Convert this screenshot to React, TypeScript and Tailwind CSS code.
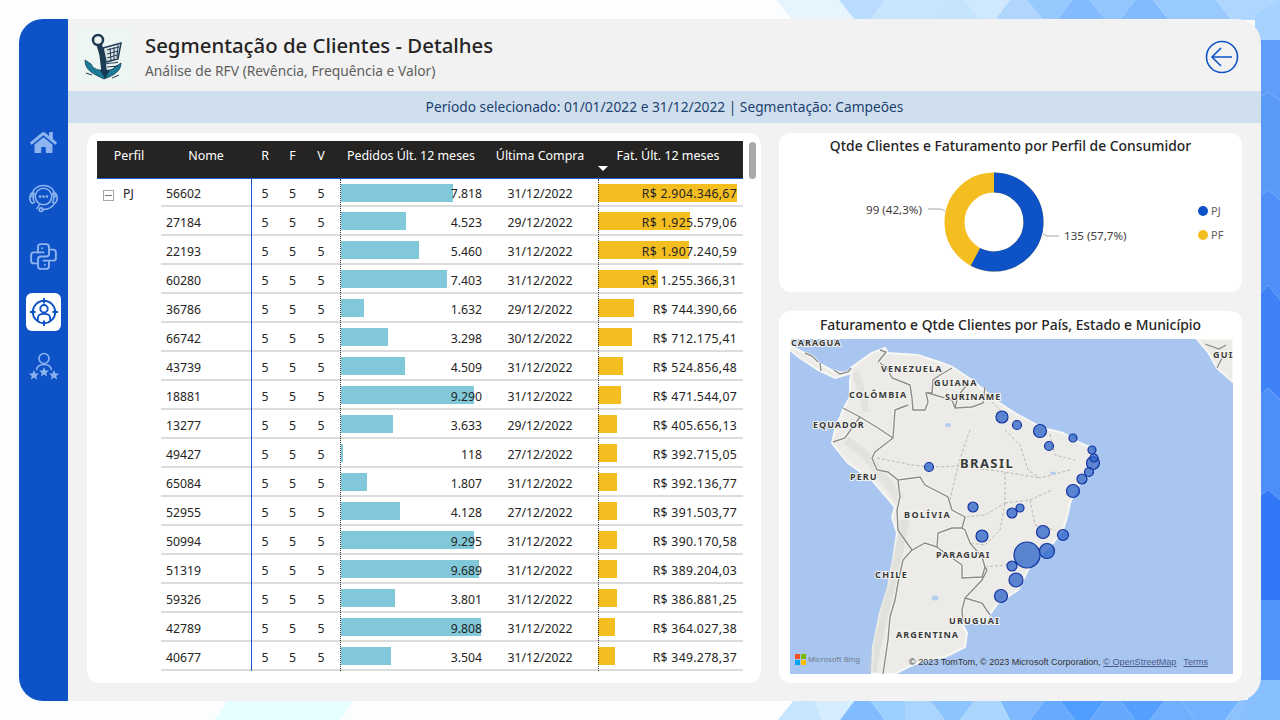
import { FaHome } from "react-icons/fa";
import { TbBrandPython } from "react-icons/tb";

const rows = [
  ["56602", 7818, "7.818", "31/12/2022", 2904346.67, "R$ 2.904.346,67"],
  ["27184", 4523, "4.523", "29/12/2022", 1925579.06, "R$ 1.925.579,06"],
  ["22193", 5460, "5.460", "31/12/2022", 1907240.59, "R$ 1.907.240,59"],
  ["60280", 7403, "7.403", "31/12/2022", 1255366.31, "R$ 1.255.366,31"],
  ["36786", 1632, "1.632", "29/12/2022", 744390.66, "R$ 744.390,66"],
  ["66742", 3298, "3.298", "30/12/2022", 712175.41, "R$ 712.175,41"],
  ["43739", 4509, "4.509", "31/12/2022", 524856.48, "R$ 524.856,48"],
  ["18881", 9290, "9.290", "31/12/2022", 471544.07, "R$ 471.544,07"],
  ["13277", 3633, "3.633", "29/12/2022", 405656.13, "R$ 405.656,13"],
  ["49427", 118, "118", "27/12/2022", 392715.05, "R$ 392.715,05"],
  ["65084", 1807, "1.807", "31/12/2022", 392136.77, "R$ 392.136,77"],
  ["52955", 4128, "4.128", "27/12/2022", 391503.77, "R$ 391.503,77"],
  ["50994", 9295, "9.295", "31/12/2022", 390170.58, "R$ 390.170,58"],
  ["51319", 9689, "9.689", "31/12/2022", 389204.03, "R$ 389.204,03"],
  ["59326", 3801, "3.801", "31/12/2022", 386881.25, "R$ 386.881,25"],
  ["42789", 9808, "9.808", "31/12/2022", 364027.38, "R$ 364.027,38"],
  ["40677", 3504, "3.504", "31/12/2022", 349278.37, "R$ 349.278,37"],
] as const;

// top, bottom and right strips of the mosaic behind the report
const mosaic: [string, string][] = [
  ["777,0 839,0 855,20 792,20", "#e6f4fe"],
  ["839,0 885,0 870,20 855,20", "#b9dbfe"],
  ["885,0 947,0 932,20 870,20", "#c8e5fe"],
  ["947,0 965,0 981,20 932,20", "#c5e4fe"],
  ["965,0 1010,0 995,20 981,20", "#cfe8fe"],
  ["1010,0 1027,0 1043,20 995,20", "#b1d6fe"],
  ["1027,0 1072,0 1057,20 1043,20", "#97c8fe"],
  ["1072,0 1090,0 1106,20 1057,20", "#84bbfe"],
  ["1090,0 1135,0 1120,20 1106,20", "#93c5fe"],
  ["1135,0 1153,0 1169,20 1120,20", "#82bafe"],
  ["1153,0 1216,0 1232,20 1169,20", "#98cafe"],
  ["1216,0 1280,0 1280,20 1232,20", "#aed6fe"],
  ["228,700 353,700 340,720 215,720", "#e8ffff"],
  ["794,700 815,700 822,720 778,720", "#c5e6fe"],
  ["815,700 855,700 840,720 822,720", "#d5edfe"],
  ["855,700 870,700 885,720 840,720", "#80bcfe"],
  ["870,700 905,700 905,720 885,720", "#9bcffe"],
  ["905,700 930,700 945,720 905,720", "#aad5fe"],
  ["930,700 975,700 960,720 945,720", "#8dc4fe"],
  ["975,700 1000,700 1010,720 960,720", "#aad6fe"],
  ["1000,700 1045,700 1030,720 1010,720", "#80b8fe"],
  ["1045,700 1060,700 1075,720 1030,720", "#66abfe"],
  ["1060,700 1105,700 1090,720 1075,720", "#4f9dfe"],
  ["1105,700 1120,700 1135,720 1090,720", "#66a8fe"],
  ["1120,700 1165,700 1150,720 1135,720", "#559ffe"],
  ["1165,700 1180,700 1195,720 1150,720", "#6eb0fe"],
  ["1180,700 1240,700 1225,720 1195,720", "#72b2fe"],
  ["1240,700 1280,700 1280,720 1225,720", "#8dc2fe"],
  ["1255,15 1280,0 1280,40 1255,40", "#a5d2fe"],
  ["1255,40 1280,40 1280,100 1268,92 1255,100", "#5e9efa"],
  ["1255,100 1268,92 1280,100 1280,200 1268,190 1255,200", "#5a9bf9"],
  ["1255,200 1268,190 1280,200 1280,300 1268,285 1255,300", "#4f90f8"],
  ["1255,300 1268,285 1280,300 1280,400 1268,388 1255,400", "#3f82f7"],
  ["1255,400 1268,388 1280,400 1280,500 1268,490 1255,500", "#4d8ff9"],
  ["1255,500 1268,490 1280,500 1280,600 1255,600", "#3277f7"],
  ["1255,600 1280,600 1280,680 1255,680", "#5096fa"],
  ["1255,680 1280,680 1280,720 1240,720", "#87c0fd"],
];

const land =
  "790,339 792,347 805,353 818,363 835,372 847,373 852,367 872,353 885,348 888,353 918,355 942,363 952,367 972,380 998,402 1018,415 1035,424 1047,429 1063,433 1080,443 1090,447 1098,462 1087,477 1077,487 1070,503 1067,517 1063,530 1053,543 1043,552 1030,566 1018,590 998,603 988,617 985,623 962,623 967,633 965,647 945,657 925,660 908,667 895,674 872,674 873,647 880,613 888,587 893,560 897,533 892,517 895,507 872,480 848,463 832,443 835,430 843,410 850,397 850,380 852,373 835,378 818,370 800,358 790,350";

const borders = [
  "880,363 887,368 892,378 905,383 910,385 912,398 913,410 925,410 928,402 926,393 932,393 933,380 940,375 952,368",
  "928,393 952,400 955,408 972,407 983,403 985,387",
  "955,408 958,396 966,386",
  "895,410 908,405 895,410 893,438 875,452 872,458 877,470 888,472 898,480 920,477 925,485 948,497 952,510 965,517 962,528 952,528 938,533 937,547 925,543 912,550 900,533 898,530 897,510 900,497 898,480",
  "843,408 860,417 878,428 893,438",
  "833,442 845,438 852,428 860,417",
  "937,547 945,553 962,565 962,578 982,577 985,567 982,557 970,543 965,530 962,528",
  "912,550 903,560 898,583 895,600 890,617 888,640 883,674",
  "985,567 987,570 982,580 965,598 962,610 963,622",
  "965,598 982,603 990,615",
  "805,353 812,356 818,362",
  "820,363 821,371",
  "834,370 840,374 848,372 851,368",
  "880,350 886,352 878,362",
];

const stateLines = [
  "877,458 912,465 933,467 958,466 1005,472 1040,478",
  "970,430 962,453 958,466 950,500",
  "1005,472 1005,503 985,515 965,517",
  "1005,503 1030,500 1052,490",
  "1005,430 1020,445 1028,470 1040,478 1070,470",
  "1050,434 1055,455 1075,460",
  "1005,503 1000,530 985,545 970,543",
  "1030,500 1035,525 1055,530",
  "985,567 1005,565 1025,560",
  "985,395 1002,412",
];

const places: [string, number, number, number, number][] = [
  ["CARAGUA", 791, 346, 9, 1],
  ["VENEZUELA", 881, 372, 9, 1.1],
  ["GUIANA", 934, 386, 9, 1.2],
  ["SURINAME", 945, 400, 9, 1],
  ["COLÔMBIA", 849, 398, 9, 1.2],
  ["EQUADOR", 813, 428, 9, 1],
  ["PERU", 850, 480, 9, 1.1],
  ["BRASIL", 960, 468, 13, 1.4],
  ["BOLÍVIA", 904, 518, 9, 1.4],
  ["PARAGUAI", 936, 558, 9, 1],
  ["CHILE", 875, 578, 9, 1.4],
  ["URUGUAI", 949, 624, 9, 1.2],
  ["ARGENTINA", 896, 638, 9, 1.1],
  ["GUI", 1213, 358, 9, 1.2],
];

const bubbles = [
  [1002, 417, 6], [1017, 425, 4.5], [929, 467, 4.5], [1040, 431, 6.5], [1049, 446, 4.5],
  [1073, 438, 4], [1092, 450, 4], [1093, 463, 6.5], [1094, 458, 4], [1089, 472, 4.5],
  [1082, 479, 5], [1073, 491, 6.5], [973, 507, 5], [1012, 513, 5], [1020, 508, 4],
  [982, 536, 6], [1043, 532, 6.5], [1063, 535, 5.5], [1027, 555, 13], [1047, 551, 7.5],
  [1012, 566, 5], [1016, 580, 7], [1001, 596, 6.5],
];

const Logo = () => (
  <svg viewBox="0 0 60 60" className="h-[60px] w-[60px]">
    <rect width="60" height="60" fill="#eef6f4" />
    <circle cx="24" cy="14" r="5" fill="none" stroke="#1d3b52" strokeWidth="2.5" />
    <path d="M25 18 L28 28 L30 44" stroke="#1d3b52" strokeWidth="5.5" fill="none" />
    <path d="M29 22 L47 17 L44 33 L32 36 Z" fill="#dfe7e6" stroke="#1d3b52" strokeWidth="1.5" />
    <path d="M33 24 L45 21 M33 28 L44 25 M33 32 L43 29 M36 22 L37 35 M40 21 L40 34 M44 19 L43 32" stroke="#1d3b52" strokeWidth="1" />
    <path d="M11 34 C11 45 20 48 30 53 C38 50 47 46 47 37 L41 41 C37 45 34 44 32 44 L27 44 C22 44 19 42 17 38 Z" fill="#1b7e98" stroke="#143a55" strokeWidth="0.8" />
    <path d="M26 44 L31 53 L36 44 Z" fill="#143a55" />
    <path d="M32 38 C36 36 40 38 44 36 M33 41 C37 40 40 41 44 40" stroke="#1d3b52" strokeWidth="1.2" fill="none" />
    <path d="M12 47 L18 49 M38 52 L45 49" stroke="#143a55" strokeWidth="1" />
  </svg>
);

const HeadsetIcon = () => (
  <svg viewBox="0 0 32 32" fill="none" stroke="#8db4ee" strokeWidth="1.6" className="h-[31px] w-[31px]">
    <circle cx="16" cy="14" r="8.5" />
    <path d="M9 27 L12 22" />
    <circle cx="12.5" cy="14" r="0.6" fill="#8db4ee" />
    <circle cx="16" cy="14" r="0.6" fill="#8db4ee" />
    <circle cx="19.5" cy="14" r="0.6" fill="#8db4ee" />
    <path d="M4 15 C4 7 9 2.5 16 2.5 C23 2.5 28 7 28 15" />
    <path d="M4.5 10 C1 12 1 19 4.5 21 L6.5 20 C5 17 5 14 6.5 11 Z" />
    <path d="M27.5 10 C31 12 31 19 27.5 21 L25.5 20 C27 17 27 14 25.5 11 Z" />
    <path d="M27 21 C26 25 22 27 15 27.5" />
    <circle cx="13.5" cy="27.5" r="1.8" />
  </svg>
);

const TargetIcon = () => (
  <svg viewBox="0 0 32 32" fill="none" stroke="#0d52c7" strokeWidth="2" className="h-[30px] w-[30px]">
    <circle cx="16" cy="16" r="12" />
    <path d="M16 1 V7 M16 25 V31 M1 16 H7 M25 16 H31" />
    <circle cx="16" cy="12.5" r="4" />
    <path d="M9.5 25 V22 C9.5 19 12 18 16 18 C20 18 22.5 19 22.5 22 V25" />
  </svg>
);

const star = "M0 -5 L1.5 -1.6 L5 -1.4 L2.3 0.9 L3.2 4.5 L0 2.5 L-3.2 4.5 L-2.3 0.9 L-5 -1.4 L-1.5 -1.6 Z";

const RatedIcon = () => (
  <svg viewBox="0 0 30 30" fill="none" className="h-[30px] w-[30px]">
    <circle cx="15" cy="7.5" r="5" stroke="#8db4ee" strokeWidth="1.6" />
    <path d="M7.5 19 C8 15.5 11 13.5 15 13.5 C19 13.5 22 15.5 22.5 19" stroke="#8db4ee" strokeWidth="1.6" />
    <path d={star} fill="#8db4ee" transform="translate(5 24)" />
    <path d={star} fill="#8db4ee" transform="translate(15 21)" />
    <path d={star} fill="#8db4ee" transform="translate(25 24)" />
  </svg>
);

const Sidebar = () => (
  <nav className="flex w-[49px] shrink-0 flex-col items-center bg-[#0d52c7] pt-[109px]">
    <div className="flex h-[28px] items-center justify-center text-[#8db4ee]">
      <FaHome size={27} />
    </div>
    <div className="mt-[27px] flex h-[31px] items-center justify-center">
      <HeadsetIcon />
    </div>
    <div className="mt-[27px] flex h-[30px] items-center justify-center text-[#8db4ee]">
      <TbBrandPython size={33} strokeWidth={1.4} />
    </div>
    <div className="mt-[22px] flex h-[38px] w-[35px] items-center justify-center rounded-[6px] bg-white">
      <TargetIcon />
    </div>
    <div className="mt-[20px] flex items-center justify-center">
      <RatedIcon />
    </div>
  </nav>
);

const Header = () => (
  <div className="flex h-[72px] shrink-0 items-center pl-[6px] pr-[22px] pt-[2px]">
    <Logo />
    <div className="ml-[11px] flex-1">
      <h1 className="text-[20.35px] leading-[26px] font-medium text-[#252423]">
        Segmentação de Clientes - Detalhes
      </h1>
      <p className="mt-[4px] text-[13.8px] leading-[18px] text-[#605e5c]">
        Análise de RFV (Revência, Frequência e Valor)
      </p>
    </div>
    <svg viewBox="0 0 34 34" fill="none" stroke="#0d52c7" strokeWidth="1.6" className="mt-[2px] h-[34px] w-[34px]">
      <circle cx="17" cy="17" r="15.5" />
      <path d="M27 17 H7 M16 8 L7 17 L16 26" />
    </svg>
  </div>
);

const TableCard = () => (
  <section className="h-[550px] w-[674px] shrink-0 rounded-[12px] bg-white pl-[10px] pt-[8px]">
    <div className="relative w-[663px]">
      <div className="grid h-[37px] w-[646px] grid-cols-[64px_90px_28px_27px_34px_142px_116px_145px] items-center bg-[#252423] pb-[6px] text-center text-[12.45px] text-white">
        <span>Perfil</span>
        <span>Nome</span>
        <span>R</span>
        <span>F</span>
        <span className="pr-[4px]">V</span>
        <span>Pedidos Últ. 12 meses</span>
        <span>Última Compra</span>
        <span className="pr-[5px]">Fat. Últ. 12 meses</span>
      </div>
      <span className="absolute left-[501px] top-[25px] h-0 w-0 border-x-[5px] border-t-[5px] border-x-transparent border-t-white" />
      <div className="absolute left-[652px] top-[1px] h-[37px] w-[7px] rounded-full bg-[#a9a9a9]" />

      <div className="relative flex w-[646px] border-t border-[#1a5dcf] text-[12.25px] text-[#252423]">
        <div className="flex h-[30px] w-[64px] shrink-0 items-center pl-[6px]">
          <span className="mt-[3px] flex h-[11px] w-[11px] items-center justify-center border border-[#a6a6a6]">
            <span className="h-px w-[7px] bg-[#777]" />
          </span>
          <span className="ml-[9px]">PJ</span>
        </div>
        <div className="flex-1">
          {rows.map(([id, orders, ordersLabel, date, revenue, revenueLabel], i) => (
            <div
              key={id}
              className={`grid grid-cols-[90px_28px_27px_34px_142px_116px_145px] items-center border-b-2 border-[#dcdcdc] pt-px [&_span]:translate-y-[2px] ${
                i === 0 ? "h-[28px]" : "h-[29px]"
              }`}
            >
              <span className="pl-[5px]">{id}</span>
              <span className="text-center">5</span>
              <span className="text-center">5</span>
              <span className="pr-[4px] text-center">5</span>
              <div className="relative flex h-[18px] items-center justify-end">
                <div
                  className="absolute bottom-0 left-px top-0 bg-[#81c9da]"
                  style={{ width: (orders / 9808) * 140 }}
                />
                <span className="relative">{ordersLabel}</span>
              </div>
              <span className="text-center">{date}</span>
              <div className="relative flex h-[18px] items-center justify-end pr-[6px]">
                <div
                  className="absolute bottom-0 left-0 top-0 bg-[#f4be21]"
                  style={{ width: (revenue / 2904346.67) * 139 }}
                />
                <span className="relative tracking-[0.3px]">{revenueLabel}</span>
              </div>
            </div>
          ))}
        </div>
        <div className="absolute bottom-0 left-[154px] top-0 w-px bg-[#1a55c4]" />
        <div className="absolute bottom-0 left-[243px] top-0 border-l border-dotted border-[#333]" />
        <div className="absolute bottom-0 left-[501px] top-0 border-l border-dotted border-[#333]" />
      </div>
    </div>
  </section>
);

const DonutCard = () => (
  <section className="h-[159px] rounded-[12px] bg-white pt-[4px]">
    <h2 className="text-center text-[13.9px] leading-[18px] font-medium text-[#252423]">
      Qtde Clientes e Faturamento por Perfil de Consumidor
    </h2>
    <svg viewBox="779 155 463 137" className="h-[137px] w-[463px]">
      <circle cx="994" cy="222" r="39.5" fill="none" stroke="#f4be21" strokeWidth="20" />
      <circle
        cx="994"
        cy="222"
        r="39.5"
        fill="none"
        stroke="#0d52c7"
        strokeWidth="20"
        strokeDasharray={`${2 * Math.PI * 39.5 * 0.577} 400`}
        transform="rotate(-90 994 222)"
      />
      <path d="M928 209 H941 L945 211 M1043 234 L1047 236 H1059" fill="none" stroke="#a6a6a6" />
      <g fontFamily="'Noto Sans', sans-serif" fontSize="11.6" fill="#404040">
        <text x="866" y="214">99 (42,3%)</text>
        <text x="1064" y="240">135 (57,7%)</text>
      </g>
      <circle cx="1203" cy="211" r="5" fill="#0d52c7" />
      <circle cx="1203" cy="235" r="5" fill="#f4be21" />
      <g fontFamily="'Noto Sans', sans-serif" fontSize="11" fill="#605e5c">
        <text x="1211" y="215">PJ</text>
        <text x="1211" y="239">PF</text>
      </g>
    </svg>
  </section>
);

const MapCard = () => (
  <section className="h-[372px] rounded-[12px] bg-white px-[11px] pt-[5px]">
    <h2 className="text-center text-[13.9px] leading-[18px] font-medium text-[#252423]">
      Faturamento e Qtde Clientes por País, Estado e Município
    </h2>
    <div className="relative mt-[5px] h-[335px] w-[443px] overflow-hidden bg-[#a9c6f0]">
      <svg viewBox="790 339 443 335" className="block h-[335px] w-[443px]">
        <defs>
          <filter id="soft">
            <feGaussianBlur stdDeviation="0.5" />
          </filter>
        </defs>
        <g filter="url(#soft)">
          <polygon points={land} fill="#ecebe7" stroke="#f7f7f4" strokeWidth="2" />
          <polygon points="1197,339 1233,339 1233,382 1217,368 1208,352" fill="#ecebe7" stroke="#f7f7f4" strokeWidth="2" />
          <polyline points="872,672 878,640 886,606 894,575 900,545 905,520" fill="none" stroke="#cfcdc6" strokeWidth="9" opacity="0.35" />
          <polyline points="846,440 866,455 884,478 900,500" fill="none" stroke="#d3d1ca" strokeWidth="9" opacity="0.35" />
          <polyline points="855,372 862,392 866,412" fill="none" stroke="#d3d1ca" strokeWidth="7" opacity="0.35" />
          {stateLines.map((line) => (
            <polyline key={line} points={line} fill="none" stroke="#b4b3ae" strokeWidth="0.9" strokeDasharray="3 2" />
          ))}
          {borders.map((line) => (
            <polyline key={`${line}-halo`} points={line} fill="none" stroke="#fafaf8" strokeWidth="3" opacity="0.8" />
          ))}
          {borders.map((line) => (
            <polyline key={line} points={line} fill="none" stroke="#8c8b87" strokeWidth="1.4" />
          ))}
          <polyline points="1205,344 1219,349 1226,345" fill="none" stroke="#8c8b87" strokeWidth="1.2" />
          <polyline points="1217,368 1222,358 1229,354 1233,357" fill="none" stroke="#8c8b87" strokeWidth="1.2" />
          <ellipse cx="948" cy="425" rx="3" ry="2" fill="#b5cdee" />
          <ellipse cx="935" cy="598" rx="3.5" ry="2.5" fill="#b5cdee" />
          <ellipse cx="1053" cy="473" rx="3" ry="1.5" fill="#b5cdee" />
        </g>
        <g fontFamily="'Noto Sans', sans-serif" fontWeight="700" fill="#3a3a3a" stroke="#f4f4f1" strokeWidth="2" style={{ paintOrder: "stroke" }}>
          {places.map(([name, x, y, size, spacing]) => (
            <text key={name} x={x} y={y} fontSize={size} letterSpacing={spacing}>
              {name}
            </text>
          ))}
        </g>
        {bubbles.map(([x, y, r]) => (
          <circle key={`${x}-${y}`} cx={x} cy={y} r={r} fill="#2b62c8" fillOpacity="0.75" stroke="#12339f" strokeWidth="1.2" />
        ))}
      </svg>

      <div className="absolute bottom-[9px] left-[5px] flex items-center">
        <div className="grid h-[11px] w-[11px] grid-cols-2 gap-px">
          <span className="bg-[#f25022]" />
          <span className="bg-[#7fba00]" />
          <span className="bg-[#00a4ef]" />
          <span className="bg-[#ffb900]" />
        </div>
        <span className="ml-[2px] text-[7.6px] leading-[11px] text-[#6f7b88]">Microsoft Bing</span>
      </div>
      <div className="absolute bottom-[6px] right-[25px] flex font-['Liberation_Sans',sans-serif] text-[9.05px] leading-[12px] text-[#333]">
        <span>© 2023 TomTom, © 2023 Microsoft Corporation,&nbsp;</span>
        <span className="text-[#4a5a8a] underline">© OpenStreetMap</span>
        <span className="ml-[7px] text-[#4a5a8a] underline">Terms</span>
      </div>
    </div>
  </section>
);

export default function App() {
  return (
    <div className="relative h-[720px] w-[1280px] overflow-hidden bg-[#fcfdff] font-['Noto_Sans',sans-serif]">
      <svg viewBox="0 0 1280 720" className="absolute inset-0 h-full w-full">
        {mosaic.map(([points, fill]) => (
          <polygon key={points} points={points} fill={fill} />
        ))}
      </svg>

      <div className="relative h-full p-[19px]">
        <div className="flex h-[682px] overflow-hidden rounded-[24px] bg-[#f2f2f2]">
          <Sidebar />
          <main className="flex min-w-0 flex-1 flex-col">
            <Header />
            <div className="flex h-[32px] shrink-0 items-center justify-center bg-[#cfdfee] text-[13.75px] text-[#1d3f6f]">
              Período selecionado: 01/01/2022 e 31/12/2022 | Segmentação: Campeões
            </div>
            <div className="flex gap-[18px] pl-[19px] pt-[10px]">
              <TableCard />
              <div className="flex w-[463px] shrink-0 flex-col gap-[19px]">
                <DonutCard />
                <MapCard />
              </div>
            </div>
          </main>
        </div>
      </div>
    </div>
  );
}
